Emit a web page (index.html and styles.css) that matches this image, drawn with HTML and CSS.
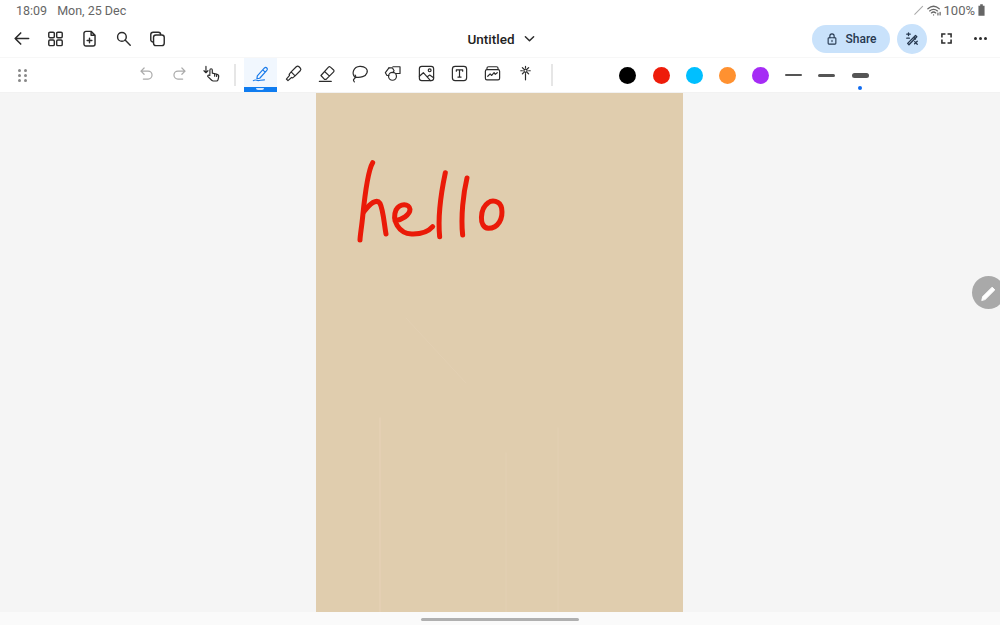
FILE: index.html
```html
<!DOCTYPE html>
<html lang="en">

<head>
    <meta charset="UTF-8">
    <title>Untitled</title>
    <link rel="stylesheet" href="styles.css">
</head>

<body>

    <div class="status-bar">
        <div class="status-left">
            <span>18:09</span>
            <span>Mon, 25 Dec</span>
        </div>
        <div class="status-right">
            <svg class="status-pen" viewBox="0 0 14 14"><path d="M1 13 12 2" /></svg>
            <svg class="status-wifi" viewBox="0 0 16 12">
                <path d="M1 4C5 .5 10 .5 14 4M3 6.500C6 4 9 4 12 6.500M5 8.800C6.500 7.500 8.500 7.500 10 8.800M7.500 11v-.1" />
                <path d="M12.500 9v2M15 8v3" />
            </svg>
            <span>100%</span>
            <svg class="status-battery" viewBox="0 0 8 13"><path d="M2.500 0h3v1.500H7.500V13H.5V1.500h2z" /></svg>
        </div>
    </div>

    <div class="top-bar">
        <div class="top-left">
            <svg class="icon" viewBox="0 0 24 24"><path d="M21 12H4M11 5l-7 7 7 7" /></svg>
            <svg class="icon" viewBox="0 0 24 24">
                <rect x="3.500" y="4" width="7" height="7" rx="1.500" />
                <rect x="13.500" y="4" width="7" height="7" rx="1.500" />
                <rect x="3.500" y="14" width="7" height="7" rx="1.500" />
                <rect x="13.500" y="14" width="7" height="7" rx="1.500" />
            </svg>
            <svg class="icon" viewBox="0 0 24 24">
                <path d="M7.500 3H14l5 5v11a2.500 2.500 0 0 1-2.500 2.500h-9A2.500 2.500 0 0 1 5 19V5.500A2.500 2.500 0 0 1 7.500 3zM14 3v5h5" />
                <path d="M12 11.500v6M9 14.500h6" />
            </svg>
            <svg class="icon" viewBox="0 0 24 24"><circle cx="10" cy="10" r="5.500" /><path d="M14 14l6.500 6.500" /></svg>
            <svg class="icon" viewBox="0 0 24 24">
                <path d="M6.500 16.500A3 3 0 0 1 3.500 13.500V7A3 3 0 0 1 6.500 4h6.500a3 3 0 0 1 3 3" />
                <rect x="7" y="7.500" width="13.500" height="13.500" rx="3" />
            </svg>
        </div>
        <div class="doc-title">
            <span>Untitled</span>
            <svg class="chevron" viewBox="0 0 12 8"><path d="M1.500 1.500 6 6l4.500-4.500" /></svg>
        </div>
        <div class="top-right">
            <div class="share-btn">
                <svg class="share-lock" viewBox="0 0 14 14">
                    <rect x="2.500" y="5.500" width="9" height="7.500" rx="1" />
                    <path d="M4.500 5.500V3.500a2.500 2.500 0 0 1 5 0v2M7 8.500v1.500" />
                </svg>
                <span>Share</span>
            </div>
            <div class="ai-btn">
                <svg class="ai-icon" viewBox="0 0 16 16">
                    <path d="M3 13 12 4l1.500 1.500-9 9zM10 6l2 2" />
                    <path d="M2 2.500h4M4 1v3M2 7h3M11 11l3 3M14 10.500l-3 3" />
                </svg>
            </div>
            <svg class="corner-icon" viewBox="0 0 12 12"><path d="M1 4V1h3M8 1h3v3M11 8v3H8M4 11H1V8" /></svg>
            <div class="more">
                <span></span><span></span><span></span>
            </div>
        </div>
    </div>

    <div class="tool-bar">
        <div class="grip">
            <span></span><span></span><span></span><span></span><span></span><span></span>
        </div>

        <div class="tool muted">
            <svg viewBox="0 0 24 24"><path d="M9 5 5 9l4 4M5 9h9a5 5 0 0 1 0 10H8" /></svg>
        </div>
        <div class="tool muted">
            <svg viewBox="0 0 24 24"><path d="M15 5l4 4-4 4M19 9h-9a5 5 0 0 0 0 10h6" /></svg>
        </div>
        <div class="tool touch">
            <svg viewBox="0 0 24 24">
                <path d="M5 3v8M2.500 8.500 5 11l2.500-2.500" />
                <path d="M10 13V7.500a1.500 1.500 0 0 1 3 0V11.500l6 1.500c1.500.5 2.500 1.500 2 3.500l-.8 3.500a2 2 0 0 1-2 1.500h-4a2.500 2.500 0 0 1-2-1L7.500 16c-1-1.500 1-2.800 2.500-1.500" />
                <path d="M16 12.500v3M18.500 13.200v2.500" />
            </svg>
        </div>

        <div class="divider"></div>

        <div class="tool active">
            <svg viewBox="0 0 24 24">
                <path d="M8 15 17 5a2 2 0 0 1 3 3l-9 10-3.500.5zM15 7.500l2.800 2.800" />
                <path d="M3 21c3-2 4 0 6 0s5-1 8-1" />
            </svg>
            <span class="active-bar"><span class="active-arc"></span></span>
        </div>
        <div class="tool">
            <svg viewBox="0 0 24 24">
                <path d="M9 10 15.500 3.500a2.500 2.500 0 0 1 3.500 0l1.500 1.500a2.500 2.500 0 0 1 0 3.500L14 15zM9 10l-2.500 3 .5 1.500L3 19l2 2 4.500-4 1.500.5 3-2.500" />
            </svg>
        </div>
        <div class="tool">
            <svg viewBox="0 0 24 24">
                <path d="M5 14.500 14.500 4a1.800 1.800 0 0 1 2.500 0l4 3.500a1.800 1.800 0 0 1 0 2.500L11.500 19.500H9.500zM9.500 9.500l6 5.500M3 22h15" />
            </svg>
        </div>
        <div class="tool">
            <svg viewBox="0 0 24 24">
                <path d="M6 16.500C2 12 4 3.500 12.500 3 19 2.700 23 6.500 21.500 11c-1.500 4.500-8 7-15.500 5.500z" />
                <path d="M6.500 14c1.500 2 .5 3.500-1 4.500S4 21 5.500 22.500" />
            </svg>
        </div>
        <div class="tool">
            <svg viewBox="0 0 24 24">
                <path d="M7.500 5H12l2 3.500-1.500 2.500" />
                <path d="M7.500 5 3 11l2 3.500h2.500" />
                <path d="M12.500 3.500H21.500V12H16.500" />
                <circle cx="12" cy="15.500" r="5" />
            </svg>
        </div>
        <div class="tool">
            <svg viewBox="0 0 24 24">
                <rect x="3" y="3" width="18" height="18" rx="3" />
                <circle cx="16" cy="8" r="1.800" />
                <path d="M3 15.500 8 11l9 10M13 16l3-2 5 3.500" />
            </svg>
        </div>
        <div class="tool">
            <svg viewBox="0 0 24 24">
                <rect x="3" y="3" width="18" height="18" rx="3.500" />
                <path d="M8 9V7.500h8V9M12 7.500v9M10 16.500h4" />
            </svg>
        </div>
        <div class="tool">
            <svg viewBox="0 0 24 24">
                <path d="M5 6.500V5.500a2 2 0 0 1 2-2h10a2 2 0 0 1 2 2v1" />
                <rect x="3" y="7" width="18" height="13" rx="2" />
                <path d="M6 15.500l3-3 2 2 3-3.500 1.500 2L18 11" />
            </svg>
        </div>
        <div class="tool">
            <svg viewBox="0 0 24 24">
                <path d="M12 12v8M12 3v2M6 8.500h2M16 8.500h2M8 4.500l1.500 1.500M16 4.500l-1.500 1.500M8 12.500 9.500 11M16 12.500 14.500 11" />
                <circle cx="12" cy="8.500" r="2" />
            </svg>
        </div>

        <div class="divider second"></div>

        <div class="swatches">
            <div class="swatch"><span class="dot black"></span></div>
            <div class="swatch"><span class="dot red"></span></div>
            <div class="swatch"><span class="dot cyan"></span></div>
            <div class="swatch"><span class="dot orange"></span></div>
            <div class="swatch"><span class="dot purple"></span></div>
            <div class="swatch"><span class="line thin"></span></div>
            <div class="swatch"><span class="line mid"></span></div>
            <div class="swatch"><span class="line thick"></span><span class="picked"></span></div>
        </div>
    </div>

    <div class="canvas">
        <div class="paper">
            <svg class="ink" viewBox="0 0 367 519">
                <g class="streaks">
                    <path class="pink" d="M64 325V519" />
                    <path d="M242 335V519M190 360V519" />
                    <path d="M90 225 150 290" />
                </g>
                <g class="hello" transform="translate(24 57) scale(.3333)">
                    <path d="M98 38C85 60 75 130 68 200 65 230 60 260 60 270" />
                    <path d="M72 185C90 160 110 145 120 160 130 180 132 220 138 252" />
                    <path d="M165 212C185 210 210 195 210 178 208 160 180 158 168 180 155 210 175 250 215 252 245 253 265 245 278 230" />
                    <path d="M316 68C305 120 292 190 299 260" />
                    <path d="M381 84C370 130 362 200 368 255" />
                    <path d="M445 158C420 175 415 232 445 235 475 235 490 205 485 175 480 150 455 150 445 158" />
                </g>
            </svg>
        </div>
        <div class="fab">
            <svg viewBox="0 0 20 20"><path d="M2 18l1-4L13.500 3.500l3 3L6 17z" /></svg>
        </div>
    </div>

    <div class="nav-bar">
        <div class="nav-handle"></div>
    </div>

</body>

</html>
```

FILE: styles.css
```css
*,
*::before,
*::after {
    margin: 0;
    padding: 0;
    box-sizing: border-box;
}

html,
body {
    height: 100%;
}

body {
    display: flex;
    flex-direction: column;
    overflow: hidden;
    background-color: #fff;
    color: #222;
    font-family: Roboto, "Liberation Sans", sans-serif;
}

svg {
    display: block;
    fill: none;
    stroke: #2b2b2b;
    stroke-linecap: round;
    stroke-linejoin: round;
}

/* status bar */

.status-bar {
    height: 20px;
    padding: 0 15px 0 16px;
    display: flex;
    justify-content: space-between;
    align-items: center;
    font-size: 12.500px;
    color: #666;
}

.status-left {
    display: flex;
    gap: 10px;
}

.status-right {
    display: flex;
    align-items: center;
    gap: 3px;
    font-size: 13px;
}

.status-pen {
    width: 10px;
    height: 10px;
    stroke: #aaa;
    stroke-width: 1.500;
}

.status-wifi {
    width: 14px;
    height: 11px;
    stroke: #666;
    stroke-width: 1.400;
}

.status-battery {
    width: 7px;
    height: 12px;
    fill: #666;
    stroke: none;
}

/* top bar */

.top-bar {
    height: 37px;
    padding: 0 10px 0 12px;
    display: grid;
    grid-template-columns: 1fr auto 1fr;
    align-items: center;
}

.top-left {
    display: flex;
    gap: 15px;
}

.icon {
    width: 19px;
    height: 19px;
    stroke-width: 1.800;
}

.top-left .icon:first-child {
    stroke-width: 2;
}

.doc-title {
    display: flex;
    align-items: center;
    gap: 9px;
    font-size: 13.500px;
    font-weight: 500;
}

.chevron {
    width: 11px;
    height: 8px;
    stroke-width: 1.600;
}

.top-right {
    display: flex;
    justify-content: flex-end;
    align-items: center;
}

.share-btn {
    width: 78px;
    height: 28px;
    border-radius: 14px;
    background-color: #c9e2fb;
    display: flex;
    justify-content: center;
    align-items: center;
    gap: 8px;
    font-size: 12px;
    font-weight: 500;
    color: #26384f;
}

.share-lock {
    width: 12px;
    height: 12px;
    stroke: #26384f;
    stroke-width: 1.300;
}

.ai-btn {
    width: 30px;
    height: 30px;
    margin-left: 7px;
    border-radius: 50%;
    background-color: #c9e2fb;
    display: flex;
    justify-content: center;
    align-items: center;
}

.ai-icon {
    width: 14px;
    height: 14px;
    stroke: #26384f;
    stroke-width: 1.500;
}

.corner-icon {
    width: 11px;
    height: 11px;
    margin-left: 14px;
    stroke-width: 1.700;
    stroke-linecap: square;
    stroke-linejoin: miter;
}

.more {
    margin-left: 22px;
    margin-right: 3px;
    display: flex;
    gap: 2px;
}

.more span {
    width: 3px;
    height: 3px;
    border-radius: 50%;
    background-color: #2b2b2b;
}

/* tool bar */

.tool-bar {
    height: 36px;
    padding-left: 18px;
    display: flex;
    align-items: center;
    border-top: 1px solid #f7f7f7;
    border-bottom: 1px solid #f2f2f2;
}

.grip {
    width: 9px;
    margin-right: 103px;
    display: grid;
    grid-template-columns: repeat(2, 3px);
    gap: 2px 3px;
}

.grip span {
    width: 3px;
    height: 3px;
    border-radius: 50%;
    background-color: #888;
}

.tool {
    width: 33.200px;
    height: 100%;
    position: relative;
    display: flex;
    justify-content: center;
    align-items: center;
}

.tool svg {
    width: 19px;
    height: 19px;
    stroke-width: 1.500;
    margin-top: -3px;
}

.tool.muted svg {
    stroke: #aaa;
}

.tool.touch svg {
    margin-left: -3px;
}

.tool.active {
    background-color: #f1f7fe;
}

.tool.active svg {
    stroke: #1a7bea;
}

/* sits over the bottom edge of the active tool */
.active-bar {
    position: absolute;
    left: 0;
    right: 0;
    bottom: 0;
    height: 5px;
    background-color: #0f7cf0;
    display: flex;
    justify-content: center;
}

.active-arc {
    width: 8px;
    height: 2px;
    margin-top: 1px;
    border-radius: 0 0 4px 4px;
    background-color: #d6e8fc;
}

.divider {
    width: 2px;
    height: 22px;
    margin: 0 8px 0 4px;
    background-color: #e6e6e6;
}

.divider.second {
    margin: 0 58px 0 9px;
}

.swatches {
    display: flex;
}

.swatch {
    width: 33.200px;
    height: 34px;
    position: relative;
    display: flex;
    justify-content: center;
    align-items: center;
}

.dot {
    width: 17px;
    height: 17px;
    border-radius: 50%;
}

.black {
    background-color: #000;
}

.red {
    background-color: #ee1c0a;
}

.cyan {
    background-color: #00bfff;
}

.orange {
    background-color: #ff9130;
}

.purple {
    background-color: #a52cf5;
}

.line {
    width: 17px;
    background-color: #555;
    border-radius: 3px;
}

.thin {
    height: 2px;
}

.mid {
    height: 3px;
}

.thick {
    height: 5px;
}

.picked {
    position: absolute;
    left: 50%;
    bottom: 2px;
    width: 4px;
    height: 4px;
    margin-left: -2px;
    border-radius: 50%;
    background-color: #0f6bf0;
}

/* canvas */

.canvas {
    flex: 1;
    position: relative;
    overflow: hidden;
    padding-right: 1px;
    background-color: #f5f5f5;
    display: flex;
    justify-content: center;
}

.paper {
    width: 367px;
    background-color: #e0cdae;
}

.ink {
    width: 100%;
    height: 100%;
}

.hello path {
    stroke: #ea1a08;
    stroke-width: 15;
}

.streaks path {
    stroke: #e3d0b3;
    stroke-width: 1;
}

.streaks .pink {
    stroke: #e8d2b8;
}

/* floating pen button, hangs off the right edge */
.fab {
    position: absolute;
    top: 183px;
    left: 972px;
    width: 33px;
    height: 33px;
    border-radius: 50%;
    background-color: #a9a9a9;
    display: flex;
    align-items: center;
    padding-left: 8px;
}

.fab svg {
    width: 18px;
    height: 18px;
    fill: #fff;
    stroke: #fff;
    stroke-width: 1;
}

/* nav bar */

.nav-bar {
    height: 13px;
    background-color: #fafafa;
    display: flex;
    justify-content: center;
    align-items: center;
}

.nav-handle {
    width: 158px;
    height: 3px;
    margin-top: 1px;
    border-radius: 2px;
    background-color: #b0b0b0;
}
```
